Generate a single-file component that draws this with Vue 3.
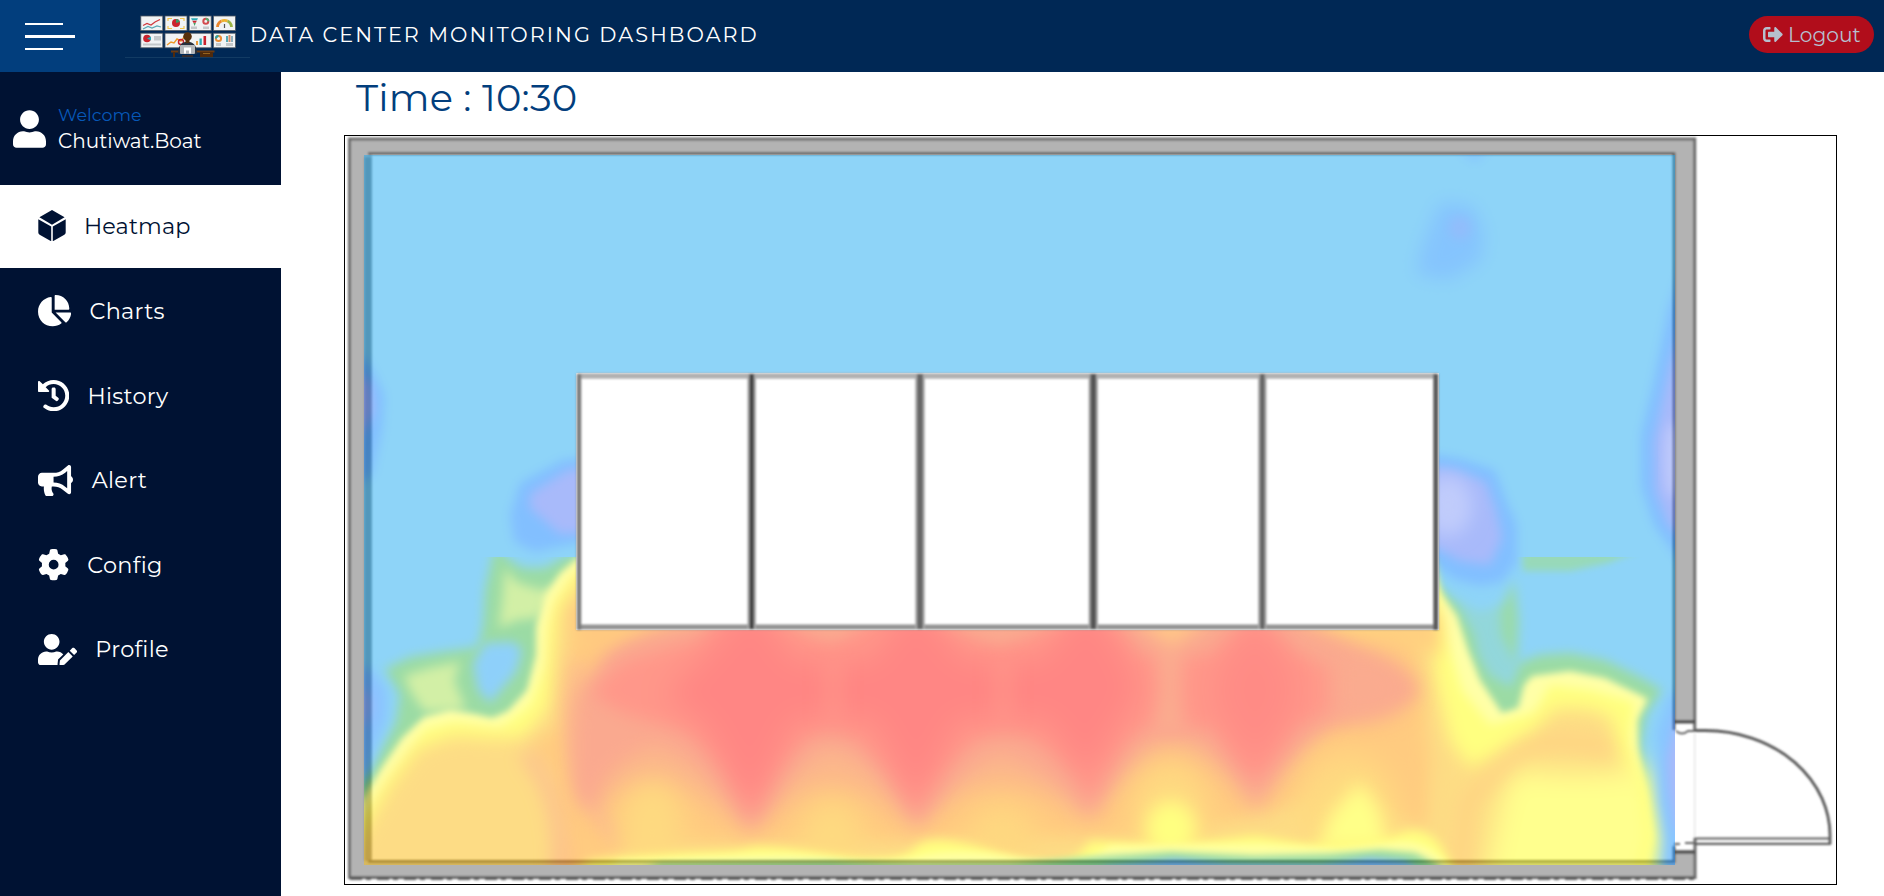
<script setup>
const userPath = 'M224 256c70.7 0 128-57.3 128-128S294.7 0 224 0 96 57.3 96 128s57.3 128 128 128zm89.6 32h-16.7c-22.2 10.2-46.9 16-72.9 16s-50.6-5.8-72.9-16h-16.7C60.2 288 0 348.2 0 422.4V464c0 26.5 21.5 48 48 48h352c26.5 0 48-21.5 48-48v-41.6c0-74.2-60.2-134.4-134.4-134.4z'

const items = [
  { label: 'Heatmap', box: '0 0 448 512', w: 28, gap: 18, active: true, d: 'M18 120L224 2l206 118L224 240zM0 150L211 268V512L22 404Q0 392 0 368zM448 150L237 268V512L426 404Q448 392 448 368z' },
  { label: 'Charts', box: '32 0 544 512', w: 33.3, gap: 18.2, d: 'M304 240V16.6c0-9 7-16.6 16-16.6C443.7 0 544 100.3 544 224c0 9-7.6 16-16.6 16H304zM32 272C32 150.7 122.1 50.3 239 34.3c9.2-1.3 17 6.1 17 15.4V288L412.5 444.5c6.7 6.7 6.2 17.7-1.5 23.1C371.8 495.6 323.8 512 272 512C139.5 512 32 404.6 32 272zm526.4 16c9.3 0 16.6 7.8 15.4 17c-7.7 55.9-34.6 105.6-73.9 142.3c-6 5.6-15.4 5.2-21.2-.7L320 288H558.4z' },
  { label: 'History', box: '8 8 496 496', w: 31.3, gap: 18.2, d: 'M504 255.531c.253 136.64-111.18 248.372-247.82 248.468-59.015.042-113.223-20.53-155.822-54.911-11.077-8.94-11.905-25.541-1.839-35.607l11.267-11.267c8.609-8.609 22.353-9.551 31.891-1.984C173.062 425.135 212.781 440 256 440c101.705 0 184-82.311 184-184 0-101.705-82.311-184-184-184-48.814 0-93.149 18.969-126.068 49.932l50.754 50.754c10.08 10.08 2.941 27.314-11.313 27.314H24c-8.837 0-16-7.163-16-16V38.627c0-14.254 17.234-21.393 27.314-11.314l49.372 49.372C129.209 34.136 189.552 8 256 8c136.81 0 247.747 110.78 248 247.531zm-180.912 78.784l9.823-12.63c8.138-10.463 6.253-25.542-4.21-33.679L288 256.349V152c0-13.255-10.745-24-24-24h-16c-13.255 0-24 10.745-24 24v135.651l65.409 50.874c10.463 8.137 25.541 6.253 33.679-4.21z' },
  { label: 'Alert', box: '0 0 576 512', w: 35, gap: 18.7, d: 'M576 240c0-23.63-12.95-44.04-32-55.12V32.01C544 23.26 537.02 0 512 0c-7.12 0-14.19 2.38-19.98 7.02l-85.03 68.03C364.28 109.19 310.66 128 256 128H64c-35.35 0-64 28.65-64 64v96c0 35.35 28.65 64 64 64h33.7c-1.39 10.48-2.18 21.14-2.18 32 0 39.77 9.26 77.35 25.56 110.94 5.19 10.69 16.52 17.06 28.4 17.06h74.28c26.05 0 41.69-29.84 25.9-50.56-16.4-21.52-26.15-48.36-26.15-77.44 0-11.11 1.62-21.79 4.41-32H256c54.66 0 108.28 18.81 150.98 52.95l85.03 68.03a32.023 32.023 0 0 0 19.98 7.02c24.92 0 32-22.78 32-32V295.13C563.05 284.04 576 263.63 576 240zm-96 141.42l-33.05-26.44C392.95 311.78 325.12 288 256 288v-96c69.12 0 136.95-23.78 190.95-66.98L480 98.58v282.84z' },
  { label: 'Config', box: '0 0 512 512', w: 31.3, gap: 18, d: 'M495.9 166.6c3.2 8.7 .5 18.4-6.4 24.6l-43.3 39.4c1.1 8.3 1.7 16.8 1.7 25.4s-.6 17.1-1.7 25.4l43.3 39.4c6.9 6.2 9.6 15.9 6.4 24.6c-4.4 11.9-9.7 23.3-15.8 34.3l-4.7 8.1c-6.6 11-14 21.4-22.1 31.2c-5.9 7.2-15.7 9.6-24.5 6.8l-55.7-17.7c-13.4 10.3-28.2 18.9-44 25.4l-12.5 57.1c-2 9.1-9 16.3-18.2 17.8c-13.8 2.3-28 3.5-42.5 3.5s-28.7-1.2-42.5-3.5c-9.2-1.5-16.2-8.7-18.2-17.8l-12.5-57.1c-15.8-6.5-30.6-15.1-44-25.4L83.1 425.9c-8.8 2.8-18.6 .3-24.5-6.8c-8.1-9.8-15.5-20.2-22.1-31.2l-4.7-8.1c-6.1-11-11.4-22.4-15.8-34.3c-3.2-8.7-.5-18.4 6.4-24.6l43.3-39.4C64.6 273.1 64 264.6 64 256s.6-17.1 1.7-25.4L22.4 191.2c-6.9-6.2-9.6-15.9-6.4-24.6c4.4-11.9 9.7-23.3 15.8-34.3l4.7-8.1c6.6-11 14-21.4 22.1-31.2c5.9-7.2 15.7-9.6 24.5-6.8l55.7 17.7c13.4-10.3 28.2-18.9 44-25.4l12.5-57.1c2-9.1 9-16.3 18.2-17.8C227.3 1.2 241.5 0 256 0s28.7 1.2 42.5 3.5c9.2 1.5 16.2 8.7 18.2 17.8l12.5 57.1c15.8 6.5 30.6 15.1 44 25.4l55.7-17.7c8.8-2.8 18.6-.3 24.5 6.8c8.1 9.8 15.5 20.2 22.1 31.2l4.7 8.1c6.1 11 11.4 22.4 15.8 34.3zM256 336a80 80 0 1 0 0-160 80 80 0 1 0 0 160z' },
  { label: 'Profile', box: '0 0 640 512', w: 39.1, gap: 18.2, d: 'M224 256c70.7 0 128-57.3 128-128S294.7 0 224 0 96 57.3 96 128s57.3 128 128 128zm89.6 32h-16.7c-22.2 10.2-46.9 16-72.9 16s-50.6-5.8-72.9-16h-16.7C60.2 288 0 348.2 0 422.4V464c0 26.5 21.5 48 48 48h274.9c-2.4-6.8-3.4-14-2.6-21.3l6.8-60.9 1.2-11.1 7.9-7.9 77.3-77.3c-24.5-27.7-60-45.5-99.9-45.5zM358.9 433.3l-6.8 61c-1.1 10.2 7.5 18.8 17.6 17.6l60.9-6.8 137.9-137.9-71.7-71.7-137.9 137.8zM633 268.9L595.1 231c-9.3-9.3-24.5-9.3-33.8 0l-37.8 37.8-4.1 4.1 71.8 71.7 41.8-41.8c9.3-9.4 9.3-24.5 0-33.9z' },
]

const racks = [
  { x: 751.7, w: 5, c: '#444' },
  { x: 920, w: 6, c: '#666' },
  { x: 1093.3, w: 6, c: '#555' },
  { x: 1262.3, w: 5, c: '#666' },
]
</script>

<template>
  <div class="page">
    <header class="topbar">
      <button class="burger" aria-label="Menu"><i></i><i></i><i></i></button>
      <svg class="logo" viewBox="125 0 125 72">
        <g fill="#f1f3f4" stroke="#4c5560" stroke-width=".8">
          <rect x="140.8" y="16" width="22" height="14.6" /><rect x="165" y="16" width="22" height="14.6" />
          <rect x="189.2" y="16" width="22" height="14.6" /><rect x="213.4" y="16" width="22" height="14.6" />
          <rect x="140.8" y="33.2" width="22" height="14.6" /><rect x="165" y="33.2" width="46.2" height="14.6" />
          <rect x="213.4" y="33.2" width="22" height="14.6" />
        </g>
        <g fill="none" stroke-width="1.2">
          <path d="M143 25.5l4-2 4 1.5 4-3 5-2.5" stroke="#d0393d" />
          <path d="M143 29l5-2.5 4 1.5 5-2 4 1" stroke="#58a8b4" />
          <path d="M168 21v-2.5h4M180 18.500h4V21M168 26v2.500h4M180 28.500h4V26" stroke="#f3c64f" />
          <path d="M217.500 27a7 7 0 0 1 4-6" stroke="#e9852c" stroke-width="2.800" />
          <path d="M221.500 21a7 7 0 0 1 6 0" stroke="#eeb331" stroke-width="2.800" />
          <path d="M227.500 21a7 7 0 0 1 4 6" stroke="#9bb446" stroke-width="2.800" />
          <path d="M224.500 28v-4" stroke="#555" />
          <path d="M167 45l4-3 3 1 3-4 4 2 4-5" stroke="#f09a2a" stroke-width="1.400" />
        </g>
        <circle cx="176" cy="23" r="4" fill="#c9232d" /><path d="M176 23v-4a4 4 0 0 1 3.800 3z" fill="#3c9867" />
        <path d="M191 18.300h7l-1 2h-5z" fill="#2ba9b5" /><path d="M192.300 20.800h4.500l-1 2h-2.500z" fill="#ca2830" /><path d="M193.400 23h2.400l-1.200 3z" fill="#45a063" />
        <path d="M191 26.500h6v2.500h-6zM203 26.500h6v2.500h-6zM154 36h7v4.500h-7zM143 43.500h18v2h-18zM216 43h5v3h-5zM226 43h7v3h-7z" fill="#c4c8ca" />
        <circle cx="205.800" cy="21.300" r="2.500" fill="none" stroke="#d24b4e" stroke-width="2" /><path d="M205.800 18.800a2.500 2.500 0 0 1 2.500 2.500" fill="none" stroke="#58ac70" stroke-width="2" />
        <circle cx="147" cy="38.500" r="3.800" fill="#c9232d" /><path d="M147 38.500l4-2v4z" fill="#2ba9b5" />
        <circle cx="218.500" cy="38.500" r="2.600" fill="none" stroke="#e98c33" stroke-width="2" /><path d="M218.500 36a2.600 2.600 0 0 0-2.600 2.500" fill="none" stroke="#28a3a6" stroke-width="2" />
        <path d="M226 36h2v6h-2z" fill="#55aab5" /><path d="M228.500 35h2v7h-2z" fill="#d98c67" /><path d="M231 36h2v6h-2z" fill="#8eb0bd" />
        <path d="M196 41h2v4h-2z" fill="#e99938" /><path d="M199.500 38.500h2.300V45h-2.300z" fill="#2ba9b5" /><path d="M203.500 36h2.600v9h-2.600z" fill="#c9232d" />
        <circle cx="181" cy="42" r="2.500" fill="none" stroke="#c9232d" stroke-width="1.500" />
        <path d="M171 50.500h43.500v2H171z" fill="#6a3b12" /><path d="M173 52h2v5.500h-2zM200 52h13v5.500h-13z" fill="#4f2a0c" />
        <path d="M203 53.500h7" stroke="#96631e" stroke-width="1" />
        <path d="M178 54c0-8 3-11 7-12h5c4 1 7 4 7 12z" fill="#26303d" />
        <circle cx="187.500" cy="36.500" r="4.300" fill="#57300c" /><path d="M185.500 40h4v3h-4z" fill="#57300c" />
        <rect x="180" y="45" width="15" height="9" rx="1" fill="#b4b7ba" /><path d="M184 47.500h7v6h-2v-3h-3v3h-2z" fill="#fff" />
        <path d="M182 55h11v2.500h-11z" fill="#342b2c" />
        <path d="M125 57.500h125" stroke="#174067" stroke-width=".8" />
      </svg>
      <h1 class="title">DATA CENTER MONITORING DASHBOARD</h1>
      <button class="logout">
        <svg viewBox="0 64 512 384"><path d="M497 273L329 441c-15 15-41 4.500-41-17v-96H152c-13.300 0-24-10.700-24-24v-96c0-13.300 10.700-24 24-24h136V88c0-21.400 25.900-32 41-17l168 168c9.300 9.400 9.300 24.600 0 34zM192 436v-40c0-6.600-5.400-12-12-12H96c-17.700 0-32-14.300-32-32V160c0-17.700 14.300-32 32-32h84c6.600 0 12-5.400 12-12V76c0-6.600-5.400-12-12-12H96c-53 0-96 43-96 96v192c0 53 43 96 96 96h84c6.600 0 12-5.400 12-12z" /></svg>
        <span>Logout</span>
      </button>
    </header>

    <div class="body">
      <aside class="sidebar">
        <div class="user">
          <svg viewBox="0 0 448 512"><path :d="userPath" /></svg>
          <div class="names">
            <div class="welcome">Welcome</div>
            <div class="name">Chutiwat.Boat</div>
          </div>
        </div>
        <nav>
          <a v-for="it in items" :key="it.label" :class="{ active: it.active }">
            <svg :viewBox="it.box" :style="{ width: it.w + 'px', marginRight: it.gap + 'px' }"><path :d="it.d" /></svg>
            <span>{{ it.label }}</span>
          </a>
        </nav>
      </aside>

      <main>
        <h2>Time : 10:30</h2>
        <svg class="plan" viewBox="345 136 1491 748">
          <defs>
            <clipPath id="room"><path clip-rule="evenodd" d="M364 155H1675V865H364zM576.500 373.300H1438.700V630H576.500z" /></clipPath>
            <clipPath id="lower"><path d="M340 557H1700V900H340z" /></clipPath>
            <filter id="b1" x="-10%" y="-10%" width="120%" height="120%"><feGaussianBlur stdDeviation=".8" /></filter>
            <filter id="b3" x="-30%" y="-30%" width="160%" height="160%" color-interpolation-filters="sRGB"><feGaussianBlur stdDeviation="3.500" /></filter>
            <filter id="b5" x="-30%" y="-30%" width="160%" height="160%" color-interpolation-filters="sRGB"><feGaussianBlur stdDeviation="5.500" /></filter>
            <filter id="b9" x="-40%" y="-40%" width="180%" height="180%" color-interpolation-filters="sRGB"><feGaussianBlur stdDeviation="9" /></filter>
            <filter id="b14" x="-50%" y="-50%" width="200%" height="200%" color-interpolation-filters="sRGB"><feGaussianBlur stdDeviation="14" /></filter>
          </defs>

          <!-- walls -->
          <g filter="url(#b1)">
            <path d="M349 139H1695V722H1674V153.700H372V861H1674V852H1695V878H349z" fill="#b3b3b3" />
            <path d="M364.500 157H371.500V861H364.500z" fill="#858585" />
            <path d="M1694.700 730V139H349.500V877.500H1695V838" fill="none" stroke="#6a6a6a" stroke-width="3" />
            <path d="M350 878.500H1695" stroke="#5c5c5c" stroke-width="2.800" stroke-dasharray="12 4 5 6" />
            <path d="M1674 730V153.700H368M368 861.500H1674V846" fill="none" stroke="#606060" stroke-width="2.800" />
            <path d="M1674 721.700H1695M1674 852H1695" stroke="#505050" stroke-width="3.500" />
            <path d="M1676 731q6 5 12 0h7M1674 844h6m5-1h10" fill="none" stroke="#666" stroke-width="2" />
            <path d="M1694.700 733V838" stroke="#e6e6e6" stroke-width="1.500" />
            <path d="M1695 730.500H1705A125 105 0 0 1 1830 838V844" fill="none" stroke="#5a5a5a" stroke-width="2.800" />
            <path d="M1694 838.500H1831M1694 843.800H1831" stroke="#5c5c5c" stroke-width="2.200" />
          </g>

          <!-- temperature field -->
          <g clip-path="url(#room)" opacity=".5">
            <rect x="360" y="150" width="1320" height="720" fill="#1da9f1" />

            <g filter="url(#b5)" fill="#057fff">
              <path d="M350 350L368 362L384 395L382 430L372 475L350 490z" />
              <path d="M600 457L563 460L520 483L510 515L514 542L535 552L580 542L600 532z" />
              <path d="M1430 454L1462 459L1495 470L1506 500L1517 525L1517 562L1502 582L1480 586L1455 580L1430 562z" />
              <path d="M1690 245L1668 310L1653 385L1641 435L1641 485L1654 525L1690 575z" />
              <path d="M1457 150H1490L1475 163z" opacity=".6" />
            </g>
            <g filter="url(#b9)" fill="#057fff">
              <path d="M1440 202L1472 205L1484 230L1482 260L1450 280L1416 275L1422 245z" opacity=".75" />
            </g>
            <ellipse cx="1460" cy="228" rx="11" ry="12" fill="#2f74f5" opacity=".7" filter="url(#b5)" />
            <g filter="url(#b5)" fill="#5174f5">
              <path d="M350 372L370 382L374 410L367 425L350 445z" />
              <path d="M600 467L568 470L530 494L530 508L560 534L600 532z" />
              <path d="M1430 466L1455 470L1486 482L1496 510L1502 538L1490 565L1460 561L1430 545z" />
              <path d="M1690 300L1670 365L1654 440L1655 490L1668 525L1690 545z" />
            </g>
            <ellipse cx="1448" cy="506" rx="24" ry="30" fill="#8198f7" filter="url(#b9)" />
            <ellipse cx="1673" cy="460" rx="9" ry="38" fill="#7e94f7" filter="url(#b5)" />

            <g clip-path="url(#lower)">
              <!-- green rim -->
              <g filter="url(#b5)" fill="#37b749">
                <path d="M355 795L376 760L396 722L400 695L385 669L410 657L440 652L478 647L483 625L485 590L495 545L510 560L523 568L545 568L565 556L590 550H1430L1436 583L1458 606L1474 635L1478 655L1490 676L1510 686L1521 662L1540 655L1570 653L1605 660L1640 677L1662 690L1646 715L1641 745L1648 785L1654 820L1653 850L1646 880H355z" />
                <path d="M1514 580L1500 610L1501 635L1517 665L1519 620z" opacity=".85" />
                <path d="M1440 590L1480 612L1515 600L1516 670L1500 690L1470 660z" opacity=".35" />
              </g>
              <path filter="url(#b3)" fill="#37b749" d="M1522 545H1652L1608 563L1570 571L1523 571z" opacity=".75" />
              <g fill="#a5df4c" filter="url(#b5)">
                <path d="M505 568L516 582L540 590L556 586L538 618L517 620L499 628L502 602z" />
                <path d="M404 676L430 668L460 662L454 680L466 710L425 712L412 694z" />
              </g>
              <path d="M485 643L514 642L522 650L516 672L490 703L478 690L473 664z" fill="#1da1f5" filter="url(#b5)" />

              <!-- yellow -->
              <path filter="url(#b3)" fill="#ffff50" d="M355 812L382 767L402 738L424 717L450 710L475 714L492 718L508 711L527 690L536 655L536 627L544 596L560 573L580 556H1428L1440 592L1457 616L1468 650L1480 680L1502 713L1518 708L1524 685L1532 676L1570 671L1605 678L1648 699L1637 720L1638 750L1646 800L1651 835L1642 880H355z" />
              <path filter="url(#b5)" fill="#ffff00" d="M355 828L390 776L425 729L455 722L500 728L530 705L546 665L548 627L556 600L572 577L590 562H1430L1440 610L1450 650L1462 690L1490 725L1535 712L1550 685L1590 690L1635 702L1630 740L1641 790L1646 835L1636 880H355z" />

              <!-- orange base -->
              <path filter="url(#b9)" fill="#fbb90a" d="M350 855L388 788L418 748L455 735L490 738L525 737L549 705L554 650L558 610L585 570H1425L1431 630L1436 680L1450 740L1470 768L1500 752L1530 735L1555 708L1590 709L1612 718L1616 740L1638 800L1610 850L1500 880H350z" />
              <path filter="url(#b9)" fill="#ff9700" d="M600 580L573 610L568 660L560 725L530 745L552 775L562 830L556 880H580L640 842L830 842L1000 838L1170 835L1350 790L1425 830L1430 760L1422 690L1415 630z" />
              <path filter="url(#b9)" fill="none" stroke="#f7672c" stroke-width="15" opacity=".6" d="M525 753Q550 780 557 820T557 875M578 660Q566 760 590 800T620 840" />
              <path filter="url(#b14)" fill="#ffff1c" d="M1512 768Q1590 780 1650 765L1665 835L1656 900H1480L1500 800z" />
              <path filter="url(#b3)" fill="#ffff00" opacity=".6" d="M1634 750L1648 800L1654 840L1645 880H1630L1642 835z" />
              <path filter="url(#b9)" fill="none" stroke="#ff9e05" stroke-width="15" opacity=".65" d="M1462 870L1466 805L1520 750Q1560 732 1610 752" />

              <!-- salmon waves -->
              <path filter="url(#b14)" fill="#f5601f" opacity=".75" d="M575 690H1340Q1290 770 1256 812Q1220 765 1170 750Q1120 775 1090 822Q1050 790 1000 785Q950 790 916 832Q880 795 830 785Q790 795 751 836Q700 790 655 780Q610 790 590 820z" />
              <path filter="url(#b9)" fill="#f5531f" d="M610 645Q670 618 740 614H1290L1370 652Q1420 675 1418 693Q1400 715 1340 724Q1290 745 1256 808Q1220 742 1170 733Q1135 742 1090 818Q1050 768 1000 755Q960 768 917 828Q880 760 830 750Q790 765 751 832Q710 762 655 745Q612 758 600 790Q590 825 576 790Q568 730 580 690z" />
              <path filter="url(#b9)" fill="#ff2f14" d="M592 692L620 664Q660 648 700 640Q720 612 752 610Q800 635 830 640Q880 612 915 610Q960 640 1000 645Q1060 630 1090 610L1118 630L1140 655H1210L1255 612L1300 655L1335 670V710L1300 725L1255 785L1210 728H1148Q1120 735 1090 805Q1065 745 1005 730Q950 742 916 816Q880 745 830 728Q780 745 752 820Q715 735 660 724Q615 714 592 692z" />
              <g filter="url(#b14)" fill="#ff0a07" opacity=".9">
                <path d="M752 600L795 660H870L915 600L965 660H1040L1088 600L1125 655L1140 690L1120 722L1088 775L1045 720H960L916 800L872 720H795L751 810L705 725L665 695L700 660z" />
                <path d="M1255 620L1285 660Q1305 692 1285 720L1255 765L1225 720Q1205 692 1225 660z" opacity=".7" />
              </g>
              <path filter="url(#b9)" fill="#ff3216" opacity=".5" d="M822 655H844V725H822zM992 655H1014V725H992z" />
              <g filter="url(#b9)">
                <path fill="#f5591f" d="M1156 645H1184L1180 690L1186 735H1152L1160 690z" />
                <path d="M1130 615H1214L1172 646z" fill="#ff8f10" />
                <path d="M800 612H870L832 642zM970 612H1035L1000 644z" fill="#f5531f" />
                <path d="M1320 612H1440V655L1390 645z" fill="#ffa000" />
                <path d="M570 612H660L600 648z" fill="#ff9200" />
              </g>
              <path filter="url(#b14)" fill="#f5591f" opacity=".7" d="M1330 655H1390L1412 692L1390 718L1330 722z" />
              <g filter="url(#b14)">
                <ellipse cx="652" cy="826" rx="30" ry="44" fill="#fcb400" />
                <ellipse cx="832" cy="836" rx="30" ry="34" fill="#fcb400" />
                <ellipse cx="1002" cy="836" rx="32" ry="30" fill="#fdb000" />
                <ellipse cx="1170" cy="812" rx="38" ry="48" fill="#fdb400" />
                <ellipse cx="1348" cy="810" rx="50" ry="54" fill="#fdb400" />
              </g>
              <g filter="url(#b9)">
                <ellipse cx="1171" cy="829" rx="25" ry="28" fill="#ffff00" />
                <path d="M1318 850L1330 815L1360 782L1380 810L1388 850z" fill="#ffff10" />
              </g>

              <!-- cool strip at the bottom wall -->
              <path filter="url(#b5)" fill="#ffff00" d="M565 880L590 861Q660 854 700 853T750 848T830 855T915 848T1000 854T1090 841L1170 846L1255 836L1310 845L1390 838Q1420 820 1440 845L1462 885z" />
              <path filter="url(#b3)" fill="#ffff42" d="M590 882L620 861Q700 857 750 855T840 859T920 856T1020 858T1110 846L1260 844L1340 849L1400 842Q1430 840 1452 870V880z" />
              <path filter="url(#b3)" fill="#37b749" d="M610 882L660 864L830 862L920 865L1010 864L1080 858L1170 852L1255 856L1330 854L1380 850L1415 853L1440 866V882z" />
              <path filter="url(#b3)" fill="#127fea" d="M1060 882L1110 866L1175 859L1230 864L1320 865L1370 858L1405 861L1425 873V882z" />
            </g>

            <!-- cool edges -->
            <g filter="url(#b5)">
              <path d="M350 664L372 670L386 690L386 718L375 745L366 775H350z" fill="#1686ff" />
              <path d="M1690 685L1670 695L1657 730L1659 800L1665 840L1662 880H1690z" fill="#118bff" />
              <path d="M350 690H366L372 705L366 725H350z" fill="#4678f5" />
              <path d="M1690 715H1677L1667 760L1669 790L1676 830H1690z" fill="#5173f5" />
            </g>
          </g>

          <!-- racks -->
          <g>
            <rect x="576.500" y="373.300" width="862.200" height="256.700" fill="#fff" />
            <g filter="url(#b1)">
              <path d="M577 376H1438" stroke="#b0b0b0" stroke-width="5.500" />
              <path d="M577 627H1438" stroke="#929292" stroke-width="5" />
              <path d="M579 374V630" stroke="#7c7c7c" stroke-width="4.500" />
              <path d="M1435.800 374V630" stroke="#5c5c5c" stroke-width="5" />
              <g v-for="r in racks" :key="r.x">
                <path :d="`M${r.x} 374V629`" stroke="#a8a8a8" :stroke-width="r.w + 3.5" />
                <path :d="`M${r.x} 374V629`" :stroke="r.c" :stroke-width="r.w - 0.5" />
              </g>
            </g>
          </g>
        </svg>
      </main>
    </div>
  </div>
</template>

<style>
body { background: #fff; overflow: hidden; }
</style>

<style scoped>
.page { width: 1884px; height: 896px; display: flex; flex-direction: column; overflow: hidden; background: #fff; font-family: Montserrat, Lato, "Liberation Sans", sans-serif; font-variant-ligatures: none; }
button { border: 0; padding: 0; font: inherit; }
span { white-space: nowrap; }
.topbar { flex: none; height: 72px; background: #002855; display: flex; align-items: center; }
.burger { width: 100px; height: 72px; background: #023e7d; display: flex; flex-direction: column; justify-content: center; gap: 10px; padding-left: 25px; }
.burger i { display: block; width: 38px; height: 2px; background: #fff; }
.burger i:nth-child(2) { width: 50px; height: 3px; }
.logo { width: 125px; height: 72px; margin-left: 25px; }
.title { margin: 0; color: #fff; font-size: 20.750px; font-weight: 400; letter-spacing: 2px; flex: 1; line-height: 28px; padding-bottom: 3px; }
.logout { width: 125px; height: 37px; margin-right: 10px; margin-bottom: 3px; border-radius: 19px; background: #b10d1b; color: #b6bfce; display: flex; align-items: center; padding-left: 14px; font-size: 20.200px; overflow: hidden; }
.logout svg { width: 20px; height: 15px; margin-right: 5px; fill: currentColor; flex: none; }
.body { flex: 1; display: flex; min-height: 0; }
.sidebar { width: 281px; flex: none; background: #001233; color: #fff; }
.user { height: 113px; display: flex; align-items: center; padding-left: 13px; }
.user svg { width: 33px; height: 38px; fill: #fff; margin-right: 12px; }
.names { line-height: 26px; padding-bottom: 2px; }
.welcome { color: #0758b8; font-size: 17.500px; height: 26px; }
.name { font-size: 20px; height: 26px; }
nav { display: flex; flex-direction: column; gap: 1.600px; }
nav a { box-sizing: border-box; height: 83px; display: flex; align-items: center; padding-left: 38px; color: #fff; font-size: 22.400px; letter-spacing: .3px; }
nav a.active { background: #fff; color: #001233; padding-bottom: 2px; letter-spacing: .1px; }
nav svg { height: 31.300px; fill: currentColor; flex: none; }
main { flex: 1; padding-left: 63px; }
h2 { margin: 0; height: 63px; padding-left: 12px; color: #023e7d; font-size: 38.400px; font-weight: 400; letter-spacing: .2px; line-height: 51px; }
.plan { display: block; width: 1491px; height: 748px; border: 1px solid #000; }
</style>
